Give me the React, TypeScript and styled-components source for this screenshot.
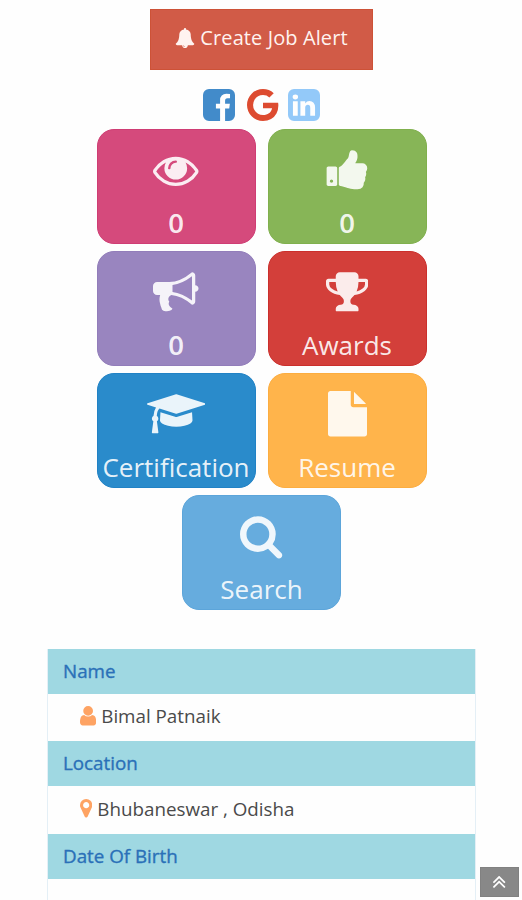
import React from "react";
import styled, { createGlobalStyle } from "styled-components";

const GlobalStyle = createGlobalStyle`
  * { box-sizing: border-box; }
  body {
    margin: 0;
    background: #fefefe;
    font-family: "Open Sans", "Noto Sans", sans-serif;
    overflow: hidden;
  }
`;

type Glyph = { box: string; ratio: number; d: string };

const glyphs: Record<string, Glyph> = {
  bell: {
    box: "0 0 1792 1792",
    ratio: 1,
    d: "M912 1696q0-16-16-16-59 0-101.5-42.5t-42.5-101.5q0-16-16-16t-16 16q0 73 51.5 124.5t124.5 51.5q16 0 16-16zm816-288q0 52-38 90t-90 38h-448q0 106-75 181t-181 75-181-75-75-181h-448q-52 0-90-38t-38-90q50-42 91-88t85-119.5 74.5-158.5 50-206 19.5-260q0-152 117-282.5t307-158.5q-8-19-8-39 0-40 28-68t68-28 68 28 28 68q0 20-8 39 190 28 307 158.5t117 282.5q0 139 19.5 260t50 206 74.5 158.5 85 119.5 91 88z",
  },
  facebook: {
    box: "128 128 1536 1536",
    ratio: 1,
    d: "M1376 128q119 0 203.5 84.5t84.5 203.5v960q0 119-84.5 203.5t-203.5 84.5h-188v-595h199l30-232h-229v-148q0-56 23.5-84t91.5-28l122-1v-207q-63-9-178-9-136 0-217.5 80t-81.5 226v171h-200v232h200v595h-532q-119 0-203.5-84.5t-84.5-203.5v-960q0-119 84.5-203.5t203.5-84.5h960z",
  },
  google: {
    box: "128 128 1536 1536",
    ratio: 1,
    d: "M896 786h725q12 67 12 128 0 217-91 387.5t-259.5 266.5-386.5 96q-157 0-299-60.5t-245-163.5-163.5-245-60.5-299 60.5-299 163.5-245 245-163.5 299-60.5q300 0 515 201l-209 201q-123-119-306-119-129 0-238.5 65t-173.5 176.5-64 243.5 64 243.5 173.5 176.5 238.5 65q87 0 160-24t120-60 82-82 51.5-87 22.5-78h-436v-264z",
  },
  linkedin: {
    box: "128 128 1536 1536",
    ratio: 1,
    d: "M365 1414h231v-694h-231v694zm246-908q-1-52-36-86t-93-34-94.5 34-36.5 86q0 51 35.5 85.5t92.5 34.5h1q59 0 95-34.5t36-85.5zm585 908h231v-398q0-154-73-233t-193-79q-136 0-209 117h2v-101h-231q3 66 0 694h231v-388q0-38 7-56 15-35 45-59.5t74-24.5q116 0 116 157v371zm468-998v960q0 119-84.5 203.5t-203.5 84.5h-960q-119 0-203.5-84.5t-84.5-203.5v-960q0-119 84.5-203.5t203.5-84.5h960q119 0 203.5 84.5t84.5 203.5z",
  },
  eye: {
    box: "0 0 1792 1792",
    ratio: 1,
    d: "M1664 960q-152-236-381-353 61 104 61 225 0 185-131.5 316.5t-316.5 131.5-316.5-131.5-131.5-316.5q0-121 61-225-229 117-381 353 133 205 333.5 326.5t434.5 121.5 434.5-121.5 333.5-326.5zm-720-384q0-20-14-34t-34-14q-125 0-214.5 89.5t-89.5 214.5q0 20 14 34t34 14 34-14 14-34q0-86 61-147t147-61q20 0 34-14t14-34zm848 384q0 34-20 69-140 230-376.5 368.5t-499.5 138.5-499.5-139-376.5-368q-20-35-20-69t20-69q140-229 376.5-368t499.5-139 499.5 139 376.5 368q20 35 20 69z",
  },
  thumb: {
    box: "0 0 1728 1792",
    ratio: 1728 / 1792,
    d: "M320 1344q0-26-19-45t-45-19q-27 0-45.5 19t-18.5 45q0 27 18.5 45.5t45.5 18.5q26 0 45-18.5t19-45.5zm160-512v640q0 26-19 45t-45 19h-288q-26 0-45-19t-19-45v-640q0-26 19-45t45-19h288q26 0 45 19t19 45zm1184 0q0 86-55 149 15 44 15 76 3 76-43 137 17 56 0 117-15 57-54 94 9 112-49 181-64 76-197 78h-129q-66 0-144-15.5t-121.5-29-120.5-39.5q-123-43-158-44-26-1-45-19.5t-19-44.5v-641q0-25 18-43.5t43-20.5q24-2 76-59t101-121q68-87 101-120 18-18 31-48t17.5-48.5 13.5-60.5q7-39 12.5-61t19.5-52 34-50q19-19 45-19 46 0 82.5 10.5t60 26 40 40.5 24 45 12 50 5 45 .5 39q0 38-9.5 76t-19 60-27.5 56q-3 6-10 18t-11 22-8 24h277q78 0 135 57t57 135z",
  },
  bullhorn: {
    box: "0 0 1792 1792",
    ratio: 1,
    d: "M1664 640q53 0 90.5 37.5t37.5 90.5-37.5 90.5-90.5 37.5v384q0 52-38 90t-90 38q-417-347-812-380-58 19-91 66t-31 100.5 40 92.5q-20 33-23 65.5t6 58 33.5 55 48 50 61.5 50.5q-29 58-111.5 83t-168.5 11.5-132-55.5q-7-23-29.5-87.5t-32-94.5-23-89-15-101 3.5-98.5 22-110.5h-122q-66 0-113-47t-47-113v-192q0-66 47-113t113-47h480q435 0 896-384 52 0 90 38t38 90v384zm-128 604v-954q-394 302-768 343v270q377 42 768 341z",
  },
  trophy: {
    box: "64 0 1664 1792",
    ratio: 1664 / 1792,
    d: "M522 883q-74-162-74-371h-256v96q0 78 94.5 162t235.5 113zm1078-275v-96h-256q0 209-74 371 141-29 235.5-113t94.5-162zm128-128v128q0 71-41.5 143t-112 130-173 97.5-215.5 44.5q-42 54-95 95-38 34-52.5 72.5t-14.5 89.5q0 54 30.5 91t97.5 37q75 0 133.5 45.5t58.5 114.5v64q0 14-9 23t-23 9h-832q-14 0-23-9t-9-23v-64q0-69 58.5-114.5t133.5-45.5q67 0 97.5-37t30.5-91q0-51-14.5-89.5t-52.5-72.5q-53-41-95-95-113-5-215.5-44.5t-173-97.5-112-130-41.5-143v-128q0-40 28-68t68-28h288v-96q0-66 47-113t113-47h576q66 0 113 47t47 113v96h288q40 0 68 28t28 68z",
  },
  cap: {
    box: "0 0 2304 1792",
    ratio: 2304 / 1792,
    d: "M1774 836l18 316q4 69-82 128t-235 93.5-323 34.5-323-34.5-235-93.5-82-128l18-316 574 181q22 7 48 7t48-7zm530-324q0 23-22 31l-1120 352q-4 1-10 1t-10-1l-652-206q-43 34-71 111.5t-34 178.5q63 36 63 109 0 69-58 107l58 433q2 14-8 25-9 11-24 11h-192q-15 0-24-11-10-11-8-25l58-433q-58-38-58-107 0-73 65-111 11-207 98-330l-333-104q-22-8-22-31t22-31l1120-352q4-1 10-1t10 1l1120 352q22 8 22 31z",
  },
  file: {
    box: "128 0 1536 1792",
    ratio: 1536 / 1792,
    d: "M1152 512v-472q22 14 36 28l408 408q14 14 28 36h-472zm-128 32q0 40 28 68t68 28h544v1056q0 40-28 68t-68 28h-1344q-40 0-68-28t-28-68v-1600q0-40 28-68t68-28h800v544z",
  },
  search: {
    box: "64 0 1664 1792",
    ratio: 1664 / 1792,
    d: "M1216 832q0-185-131.5-316.5t-316.5-131.5-316.5 131.5-131.5 316.5 131.5 316.5 316.5 131.5 316.5-131.5 131.5-316.5zm512 832q0 52-38 90t-90 38q-54 0-90-38l-343-342q-179 124-399 124-143 0-273.5-55.5t-225-150-150-225-55.5-273.5 55.5-273.5 150-225 225-150 273.5-55.5 273.5 55.5 225 150 150 225 55.5 273.5q0 220-124 399l343 343q37 37 37 90z",
  },
  user: {
    box: "256 128 1280 1536",
    ratio: 1280 / 1536,
    d: "M1536 1399q0 109-62.5 187t-150.5 78h-854q-88 0-150.5-78t-62.5-187q0-85 8.5-160.5t31.5-152 58.5-131 94-89 134.5-34.5q131 128 313 128t313-128q76 0 134.5 34.5t94 89 58.5 131 31.5 152 8.5 160.5zm-256-887q0 159-112.5 271.5t-271.5 112.5-271.5-112.5-112.5-271.5 112.5-271.5 271.5-112.5 271.5 112.5 112.5 271.5z",
  },
  marker: {
    box: "384 128 1024 1536",
    ratio: 1024 / 1536,
    d: "M1152 640q0-106-75-181t-181-75-181 75-75 181 75 181 181 75 181-75 75-181zm256 0q0 109-33 179l-364 774q-16 33-47.5 52t-67.5 19-67.5-19-46.5-52l-365-774q-33-70-33-179 0-212 150-362t362-150 362 150 150 362z",
  },
  up: {
    box: "397 432 998 972",
    ratio: 998 / 972,
    d: "M1395 1312q0 13-10 23l-50 50q-10 10-23 10t-23-10l-393-393-393 393q-10 10-23 10t-23-10l-50-50q-10-10-10-23t10-23l466-466q10-10 23-10t23 10l466 466q10 10 10 23zm0-384q0 13-10 23l-50 50q-10 10-23 10t-23-10l-393-393-393 393q-10 10-23 10t-23-10l-50-50q-10-10-10-23t10-23l466-466q10-10 23-10t23 10l466 466q10 10 10 23z",
  },
};

const Svg = styled.svg`
  display: block;
  flex: none;
  fill: currentColor;
`;

function Icon({ name, size }: { name: string; size: number }) {
  const g = glyphs[name];
  return (
    <Svg viewBox={g.box} width={size * g.ratio} height={size} aria-hidden="true">
      <path d={g.d} />
    </Svg>
  );
}

const Page = styled.main`
  height: 900px;
  overflow: hidden;
  display: flex;
  flex-direction: column;
  align-items: center;
  padding: 9px 0 0 1px;

  > * {
    flex: none;
  }
`;

const AlertButton = styled.button`
  display: flex;
  align-items: center;
  justify-content: center;
  gap: 5px;
  width: 223px;
  height: 61px;
  margin: 0;
  padding: 0 0 3px;
  border: 1px solid #cd5237;
  background: #d15b47;
  color: #fff3f0;
  font: 400 20px/28px "Open Sans", sans-serif;
  white-space: nowrap;
`;

const AlertText = styled.span`
  letter-spacing: 0.1px;
`;

const Socials = styled.div`
  display: flex;
  gap: 11px;
  width: 117px;
  margin-top: 19px;
`;

const Social = styled.a<{ $color: string; $shift?: number }>`
  color: ${(p) => p.$color};
  margin-left: ${(p) => p.$shift ?? 0}px;
`;

const Tiles = styled.section`
  display: flex;
  flex-wrap: wrap;
  justify-content: center;
  gap: 7px 12px;
  width: 331px;
  margin-top: 7.5px;
`;

const Tile = styled.a<{ $bg: string; $edge: string }>`
  display: flex;
  flex-direction: column;
  align-items: center;
  width: 159px;
  height: 115px;
  padding-top: 17.5px;
  border-radius: 17px;
  border: 1px solid ${(p) => p.$edge};
  background: ${(p) => p.$bg};
  color: rgba(255, 255, 255, 0.9);
`;

const TileLabel = styled.span<{ $strong?: boolean }>`
  margin-top: 12.5px;
  font-size: ${(p) => (p.$strong ? 27.5 : 26)}px;
  line-height: 36px;
  font-weight: ${(p) => (p.$strong ? 600 : 400)};
  white-space: nowrap;
`;

const Details = styled.dl`
  width: 429px;
  margin: 39.5px 0 0;
  border: 1px solid #e4eff6;
  border-top: 0;
`;

const Term = styled.dt`
  height: 45px;
  padding-left: 15px;
  background: #9fd8e2;
  color: #2a70b8;
  font-size: 18.8px;
  line-height: 44px;
  -webkit-text-stroke: 0.35px #2a70b8;
`;

const Value = styled.dd<{ $height: number }>`
  display: flex;
  align-items: center;
  gap: 5px;
  height: ${(p) => p.$height}px;
  margin: 0;
  padding: 0 0 3px 32px;
  color: #4a4a4a;
  font-size: 18.8px;
`;

const Accent = styled.span`
  color: #fea363;
`;

const ScrollTop = styled.button`
  position: absolute;
  left: 480px;
  top: 867px;
  display: flex;
  align-items: center;
  justify-content: center;
  width: 39px;
  height: 30px;
  padding: 0;
  border: 1px solid #818181;
  background: #888;
  color: #fff;
`;

const tiles = [
  { icon: "eye", label: "0", bg: "#d54a7c", edge: "#cf3d74", strong: true },
  { icon: "thumb", label: "0", bg: "#87b557", edge: "#80b04d", strong: true },
  { icon: "bullhorn", label: "0", bg: "#9985bf", edge: "#927dba", strong: true },
  { icon: "trophy", label: "Awards", bg: "#d33f3a", edge: "#cb2f2c" },
  { icon: "cap", label: "Certification", bg: "#2a8bcb", edge: "#2182c5" },
  { icon: "file", label: "Resume", bg: "#ffb44b", edge: "#fcad40" },
  { icon: "search", label: "Search", bg: "#66acde", edge: "#5ca5da" },
];

export default function App() {
  return (
    <>
      <GlobalStyle />
      <Page>
        <AlertButton>
          <Icon name="bell" size={20} />
          <AlertText>Create Job Alert</AlertText>
        </AlertButton>
        <Socials>
          <Social $color="#428bca"><Icon name="facebook" size={32} /></Social>
          <Social $color="#dd4b30" $shift={1}><Icon name="google" size={32} /></Social>
          <Social $color="#93c9f9" $shift={-2}><Icon name="linkedin" size={32} /></Social>
        </Socials>
        <Tiles>
          {tiles.map((t, i) => (
            <Tile key={i} $bg={t.bg} $edge={t.edge}>
              <Icon name={t.icon} size={45.5} />
              <TileLabel $strong={t.strong}>{t.label}</TileLabel>
            </Tile>
          ))}
        </Tiles>
        <Details>
          <Term>Name</Term>
          <Value $height={47}>
            <Accent><Icon name="user" size={19.5} /></Accent>
            <span>Bimal Patnaik</span>
          </Value>
          <Term>Location</Term>
          <Value $height={48}>
            <Accent><Icon name="marker" size={18.5} /></Accent>
            <span>Bhubaneswar , Odisha</span>
          </Value>
          <Term>Date Of Birth</Term>
          <Value $height={47} />
        </Details>
      </Page>
      <ScrollTop aria-label="Back to top"><Icon name="up" size={12} /></ScrollTop>
    </>
  );
}
